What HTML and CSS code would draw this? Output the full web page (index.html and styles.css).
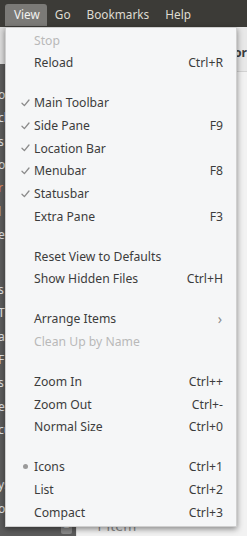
FILE: index.html
```html
<!DOCTYPE html>
<html lang="en">
<head>
    <meta charset="UTF-8">
    <meta name="viewport" content="width=device-width, initial-scale=1.0">
    <title>View menu</title>
    <link rel="stylesheet" href="styles.css">
</head>
<body>
    <div id="menubar">
        <div class="top-item active">View</div>
        <div class="top-item">Go</div>
        <div class="top-item">Bookmarks</div>
        <div class="top-item">Help</div>
    </div>

    <div id="window">
        <div id="sidebar">
            <div class="side-head"></div>
            <div class="side-list">
                <div class="side-row">o</div>
                <div class="side-row">cl</div>
                <div class="side-row">s</div>
                <div class="side-row">o</div>
                <div class="side-row orange">r</div>
                <div class="side-row">l</div>
                <div class="side-row">e</div>
                <div class="side-row gap"></div>
                <div class="side-row">s</div>
                <div class="side-row">T</div>
                <div class="side-row">a</div>
                <div class="side-row">F</div>
                <div class="side-row">s</div>
                <div class="side-row">e</div>
                <div class="side-row">cu</div>
                <div class="side-row gap"></div>
                <div class="side-row">ys</div>
                <div class="side-row">o</div>
            </div>
            <div class="side-foot"><span class="minus">−</span></div>
        </div>
        <div id="main">
            <div class="main-head">or</div>
            <div class="main-body"></div>
            <div class="main-foot">1 item</div>
        </div>
    </div>

    <div id="menu">
        <div class="item disabled"><span class="mark"></span><span class="label">Stop</span><span class="key"></span></div>
        <div class="item"><span class="mark"></span><span class="label">Reload</span><span class="key">Ctrl+R</span></div>
        <div class="sep"></div>
        <div class="item"><span class="mark check"></span><span class="label">Main Toolbar</span><span class="key"></span></div>
        <div class="item"><span class="mark check"></span><span class="label">Side Pane</span><span class="key">F9</span></div>
        <div class="item"><span class="mark check"></span><span class="label">Location Bar</span><span class="key"></span></div>
        <div class="item"><span class="mark check"></span><span class="label">Menubar</span><span class="key">F8</span></div>
        <div class="item"><span class="mark check"></span><span class="label">Statusbar</span><span class="key"></span></div>
        <div class="item"><span class="mark"></span><span class="label">Extra Pane</span><span class="key">F3</span></div>
        <div class="sep"></div>
        <div class="item"><span class="mark"></span><span class="label">Reset View to Defaults</span><span class="key"></span></div>
        <div class="item"><span class="mark"></span><span class="label">Show Hidden Files</span><span class="key">Ctrl+H</span></div>
        <div class="sep"></div>
        <div class="item"><span class="mark"></span><span class="label">Arrange Items</span><span class="key arrow">›</span></div>
        <div class="item disabled"><span class="mark"></span><span class="label">Clean Up by Name</span><span class="key"></span></div>
        <div class="sep"></div>
        <div class="item"><span class="mark"></span><span class="label">Zoom In</span><span class="key">Ctrl++</span></div>
        <div class="item"><span class="mark"></span><span class="label">Zoom Out</span><span class="key">Ctrl+-</span></div>
        <div class="item"><span class="mark"></span><span class="label">Normal Size</span><span class="key">Ctrl+0</span></div>
        <div class="sep"></div>
        <div class="item"><span class="mark dot"></span><span class="label">Icons</span><span class="key">Ctrl+1</span></div>
        <div class="item"><span class="mark"></span><span class="label">List</span><span class="key">Ctrl+2</span></div>
        <div class="item"><span class="mark"></span><span class="label">Compact</span><span class="key">Ctrl+3</span></div>
    </div>

    <svg width="0" height="0" style="position:absolute">
        <defs>
            <symbol id="tick" viewBox="0 0 9 8">
                <path d="M1 4.3 L3.4 6.6 L8 1" fill="none" stroke="#8b8b8b" stroke-width="1.3" stroke-linecap="round" stroke-linejoin="round"/>
            </symbol>
        </defs>
    </svg>
    <script>
        document.querySelectorAll('.check').forEach(function (el) {
            el.innerHTML = '<svg width="9" height="8"><use href="#tick"/></svg>';
        });
    </script>
</body>
</html>
```

FILE: styles.css
```css
body {
    margin: 0;
    width: 247px;
    height: 536px;
    overflow: hidden;
    position: relative;
    background-color: #3c3b37;
    font-family: 'Noto Sans', 'Open Sans', sans-serif;
    font-size: 12.2px;
    color: #3c3c3c;
}
#menubar {
    display: flex;
    height: 27px;
    padding: 4px 0 0 5px;
    box-sizing: border-box;
    background-color: #3c3b37;
    color: #dfdbd2;
    font-size: 11.8px;
}
.top-item {
    padding: 0 8px;
    height: 22px;
    line-height: 21px;
    border-radius: 3px 3px 0 0;
}
.top-item.active {
    background-color: #7b7a77;
    color: #f2f1ef;
    padding: 0 7px 0 9px;
}
#window {
    display: flex;
    height: 509px;
}
#sidebar {
    width: 80px;
    display: flex;
    flex-direction: column;
    background-color: #5c5c5c;
    color: #e6e6e6;
}
.side-head {
    height: 46px;
    background-color: #dcdcdc;
}
.side-list {
    flex: 1;
    padding-top: 19px;
}
.side-row {
    height: 23.3px;
    line-height: 23px;
    margin-left: -2px;
}
.side-row.gap {
    height: 32px;
}
.side-row.orange {
    color: #e08a5a;
}
.side-foot {
    height: 20px;
    position: relative;
}
.minus {
    position: absolute;
    left: 61px;
    top: 3px;
    width: 11px;
    height: 11px;
    line-height: 9px;
    font-size: 10px;
    text-align: center;
    border-radius: 2px;
    background-color: #8a8a8a;
    color: #e0e0e0;
}
#main {
    flex: 1;
    display: flex;
    flex-direction: column;
    background-color: #f2f2f2;
}
.main-head {
    height: 45px;
    padding: 17px 0 0 158px;
    box-sizing: border-box;
    background-color: #e8e8e8;
    border-bottom: 1px solid #d2d2d2;
    font-weight: bold;
    color: #3c3c3c;
}
.main-body {
    flex: 1;
}
.main-foot {
    height: 20px;
    padding: 2px 0 0 18px;
    color: #8c8c8c;
    font-size: 14px;
    border-left: 1px solid #e0e0e0;
}

/* the popup menu */
#menu {
    position: absolute;
    left: 5px;
    top: 27px;
    width: 232px;
    box-sizing: border-box;
    padding: 1px 0 3px;
    background-color: #f5f6f7;
    border: 1px solid #cfcfcf;
    box-shadow: 0 2px 6px rgba(0, 0, 0, 0.45);
}
.item {
    display: flex;
    align-items: center;
    height: 22.67px;
    padding: 0 13px 0 0;
}
.item.disabled {
    color: #b9b9b9;
}
.mark {
    width: 28px;
    display: flex;
    justify-content: center;
    align-items: center;
    padding-left: 10px;
    box-sizing: border-box;
}
.mark svg {
    display: block;
}
.mark.dot::before {
    content: '';
    width: 5px;
    height: 5px;
    border-radius: 50%;
    background-color: #9a9a9a;
}
.label {
    flex: 1;
}
.key {
    text-align: right;
}
.key.arrow {
    color: #8a8a8a;
    font-size: 14px;
    margin-right: 1px;
}
.sep {
    height: 17.33px;
}
```
